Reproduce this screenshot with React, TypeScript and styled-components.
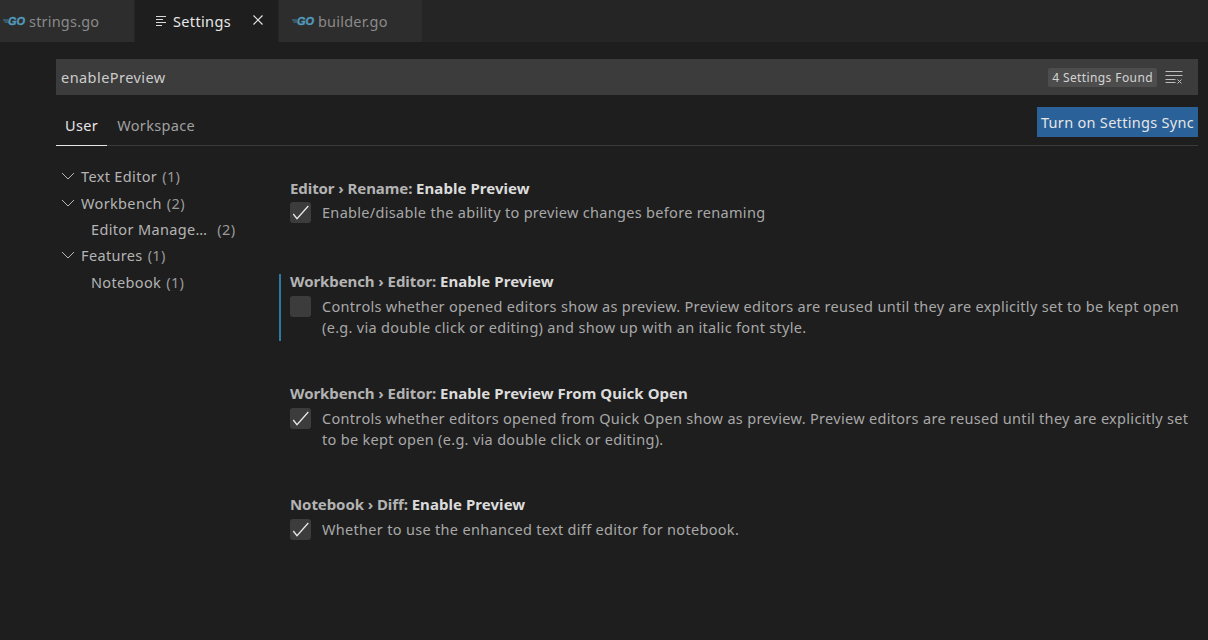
import { createGlobalStyle, styled } from 'styled-components'

const GlobalStyle = createGlobalStyle`
  html, body {
    margin: 0;
    padding: 0;
    height: 100%;
    background: #1e1e1e;
    overflow: hidden;
  }
  * {
    box-sizing: border-box;
  }
`

function GoIcon() {
  return (
    <svg width="24" height="10" viewBox="0 0 24 10" fill="none">
      <path d="M0 4h5M1.5 6h4" stroke="#519aba" strokeWidth="0.8" />
      <text
        x="5"
        y="8.8"
        fontFamily="'Liberation Sans', sans-serif"
        fontSize="11"
        fontWeight="700"
        fontStyle="italic"
        fill="#519aba"
        stroke="#519aba"
        strokeWidth="0.4"
      >
        GO
      </text>
    </svg>
  )
}

function Check() {
  return (
    <svg width="21" height="21" viewBox="0 0 21 21" fill="none">
      <path d="M3.3 12 L7 16.7 L18.3 4" stroke="#e8e8e8" strokeWidth="1.3" />
    </svg>
  )
}

function Chevron() {
  return (
    <svg width="14" height="14" viewBox="0 0 14 14" fill="none">
      <path d="M1 4 L7 10 L13 4" stroke="#b8b8b8" strokeWidth="1" />
    </svg>
  )
}

const tree = [
  { label: 'Text Editor', count: 1, nested: false },
  { label: 'Workbench', count: 2, nested: false },
  { label: 'Editor Manage…', count: 2, nested: true, clipped: true },
  { label: 'Features', count: 1, nested: false },
  { label: 'Notebook', count: 1, nested: true },
]

const settings = [
  {
    path: 'Editor › Rename: ',
    name: 'Enable Preview',
    checked: true,
    lines: ['Enable/disable the ability to preview changes before renaming'],
    height: 48,
    rowGap: 3,
  },
  {
    path: 'Workbench › Editor: ',
    name: 'Enable Preview',
    checked: false,
    active: true,
    lines: [
      'Controls whether opened editors show as preview. Preview editors are reused until they are explicitly set to be kept open',
      '(e.g. via double click or editing) and show up with an italic font style.',
    ],
    height: 67,
    rowGap: 4,
  },
  {
    path: 'Workbench › Editor: ',
    name: 'Enable Preview From Quick Open',
    checked: true,
    lines: [
      'Controls whether editors opened from Quick Open show as preview. Preview editors are reused until they are explicitly set',
      'to be kept open (e.g. via double click or editing).',
    ],
    height: 66,
    rowGap: 4,
  },
  {
    path: 'Notebook › Diff: ',
    name: 'Enable Preview',
    checked: true,
    lines: ['Whether to use the enhanced text diff editor for notebook.'],
    height: 45,
    rowGap: 4,
  },
]

export default function App() {
  return (
    <Page>
      <GlobalStyle />
      <TabBar>
        <Tab $width={134} $pad={3}>
          <GoIcon />
          <TabLabel>strings.go</TabLabel>
        </Tab>
        <ActiveTab>
          <svg width="12" height="12" viewBox="0 0 12 12" fill="none">
            <path d="M1 1.5h10M1 4.5h7M1 7.5h10M1 10.5h6" stroke="#d8d8d8" strokeWidth="1" />
          </svg>
          <ActiveLabel>Settings</ActiveLabel>
          <CloseIcon width="12" height="12" viewBox="0 0 12 12" fill="none">
            <path d="M1.5 1.5 L10.5 10.5 M10.5 1.5 L1.5 10.5" stroke="#e8e8e8" strokeWidth="1.1" />
          </CloseIcon>
        </ActiveTab>
        <Tab $width={143} $pad={13}>
          <GoIcon />
          <TabLabel>builder.go</TabLabel>
        </Tab>
      </TabBar>
      <Editor>
        <SearchBar>
          <SearchText>enablePreview</SearchText>
          <CountBadge>4 Settings Found</CountBadge>
          <svg width="18" height="14" viewBox="0 0 18 14" fill="none">
            <path d="M0.5 1.5h17M0.5 5.5h17M0.5 9.5h10M0.5 12.5h10" stroke="#bdbdbd" strokeWidth="1" />
            <path d="M12.5 9.5 L16.5 13.5 M16.5 9.5 L12.5 13.5" stroke="#bdbdbd" strokeWidth="1" />
          </svg>
        </SearchBar>
        <TabsRow>
          <ScopeTab $active>User</ScopeTab>
          <ScopeTab>Workspace</ScopeTab>
          <SyncButton>Turn on Settings Sync</SyncButton>
        </TabsRow>
        <Body>
          <Tree>
            {tree.map(item => (
              <TreeRow key={item.label} $nested={item.nested}>
                {!item.nested && <Chevron />}
                <TreeLabel $nested={item.nested} $clipped={item.clipped}>
                  {item.label}
                </TreeLabel>
                <TreeCount>({item.count})</TreeCount>
              </TreeRow>
            ))}
          </Tree>
          <List>
            {settings.map(item => (
              <Setting key={item.path + item.name} $height={item.height} $active={item.active}>
                <SettingTitle>
                  <SettingPath>{item.path}</SettingPath>
                  <SettingName>{item.name}</SettingName>
                </SettingTitle>
                <SettingRow $gap={item.rowGap}>
                  <CheckBox>{item.checked && <Check />}</CheckBox>
                  <Description>
                    {item.lines.map(line => (
                      <div key={line}>{line}</div>
                    ))}
                  </Description>
                </SettingRow>
              </Setting>
            ))}
          </List>
        </Body>
      </Editor>
    </Page>
  )
}

const Page = styled.div`
  width: 1208px;
  height: 640px;
  background: #1e1e1e;
  font-family: 'Noto Sans', 'Open Sans', sans-serif;
  font-size: 14px;
  overflow: hidden;
`
const TabBar = styled.div`
  height: 42px;
  display: flex;
  background: #252526;
`
const Tab = styled.div<{ $width: number; $pad: number }>`
  width: ${props => props.$width}px;
  margin-right: 1px;
  padding-left: ${props => props.$pad}px;
  display: flex;
  align-items: center;
  gap: 2px;
  background: #2d2d2d;
`
const TabLabel = styled.span`
  color: #8a8a8a;
  font-size: 14.5px;
  letter-spacing: 0.2px;
`
const ActiveTab = styled.div`
  width: 143px;
  margin-right: 1px;
  padding: 0 14px 0 20px;
  display: flex;
  align-items: center;
  background: #1e1e1e;
`
const ActiveLabel = styled.span`
  color: #e8e8e8;
  font-size: 14.5px;
  letter-spacing: 0.35px;
  margin-left: 6px;
  flex: 1;
`
const CloseIcon = styled.svg`
  margin-bottom: 2px;
`
const Editor = styled.div`
  padding: 17px 10px 0 56px;
`
const SearchBar = styled.div`
  height: 36px;
  padding: 0 15px 0 5px;
  display: flex;
  align-items: center;
  background: #3c3c3c;
`
const SearchText = styled.span`
  flex: 1;
  color: #cccccc;
  font-size: 14.5px;
  letter-spacing: 0.45px;
`
const CountBadge = styled.span`
  height: 19px;
  margin-right: 8px;
  padding: 0 4px;
  border-radius: 2px;
  display: flex;
  align-items: center;
  color: #d4d4d4;
  font-size: 12px;
  letter-spacing: 0.4px;
  background: #4d4d4d;
`
const TabsRow = styled.div`
  height: 51px;
  display: flex;
  align-items: flex-end;
  border-bottom: 1px solid #3a3a3a;
`
const ScopeTab = styled.div<{ $active?: boolean }>`
  height: 39px;
  padding: 0 9px 2px;
  margin-right: 1px;
  margin-bottom: -1px;
  display: flex;
  align-items: center;
  color: ${props => (props.$active ? '#e7e7e7' : '#a0a0a0')};
  font-size: 14.5px;
  letter-spacing: 0.35px;
  border-bottom: 1px solid ${props => (props.$active ? '#e7e7e7' : 'transparent')};
`
const SyncButton = styled.div`
  height: 30px;
  margin: 0 0 8px auto;
  padding: 0 4px;
  display: flex;
  align-items: center;
  color: #e6e6e6;
  font-size: 14.5px;
  letter-spacing: 0.3px;
  background: #2b6199;
`
const Body = styled.div`
  display: flex;
`
const Tree = styled.div`
  width: 224px;
  padding-top: 17px;
  flex-shrink: 0;
`
const TreeRow = styled.div<{ $nested: boolean }>`
  height: 26.4px;
  padding-left: ${props => (props.$nested ? 35 : 5)}px;
  display: flex;
  align-items: center;
  font-size: 14.5px;
  letter-spacing: 0.35px;
`
const TreeLabel = styled.span<{ $nested: boolean; $clipped?: boolean }>`
  margin-left: ${props => (props.$nested ? 0 : 6)}px;
  margin-right: ${props => (props.$clipped ? 10 : 5)}px;
  color: #b4b4b4;
`
const TreeCount = styled.span`
  color: #9a9a9a;
`
const List = styled.div`
  flex: 1;
  padding-top: 35px;
`
const Setting = styled.div<{ $height: number; $active?: boolean }>`
  height: ${props => props.$height}px;
  margin: 0 0 45px -1px;
  padding-left: 9px;
  border-left: 2px solid ${props => (props.$active ? '#2b7aa3' : 'transparent')};
`
const SettingTitle = styled.div`
  height: 13px;
  display: flex;
  align-items: center;
  white-space: pre;
  font-size: 15px;
  font-weight: 700;
`
const SettingPath = styled.span`
  color: #b3b3b3;
  letter-spacing: -0.08px;
`
const SettingName = styled.span`
  color: #dcdcdc;
  letter-spacing: 0.05px;
`
const SettingRow = styled.div<{ $gap: number }>`
  display: flex;
  margin-top: ${props => props.$gap + 5}px;
`
const CheckBox = styled.div`
  width: 21px;
  height: 21px;
  border-radius: 3px;
  flex-shrink: 0;
  background: #3c3c3c;
`
const Description = styled.div`
  margin-left: 11px;
  color: #a8a8a8;
  font-size: 14.5px;
  letter-spacing: 0.31px;
  line-height: 21px;
  white-space: nowrap;
`
